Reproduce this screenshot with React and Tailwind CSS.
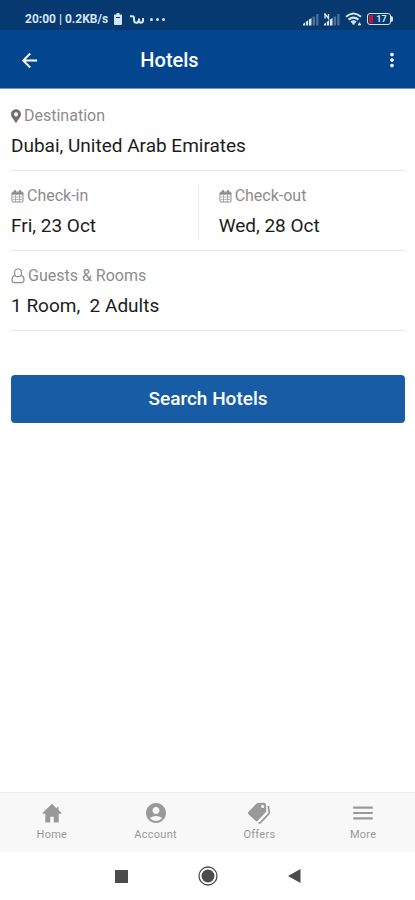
import { MdArrowBack, MdMoreVert, MdAccountCircle, MdMenu } from "react-icons/md";
import { FaMapMarkerAlt } from "react-icons/fa";

function CalendarIcon() {
  return (
    <svg viewBox="0 0 13 14" className="h-3.5 w-[13px] shrink-0" fill="none" stroke="currentColor" aria-hidden="true">
      <rect x="1" y="3" width="11" height="10" rx="1" />
      <path d="M1 4.5h11" strokeWidth="2.4" />
      <path d="M4 1v3M9 1v3" strokeWidth="1.8" />
      <path d="M2 8h9M2 10.5h9M4.5 6v7M8.5 6v7" strokeWidth="0.6" />
    </svg>
  );
}

function GuestIcon() {
  return (
    <svg viewBox="0 0 14 16" className="h-4 w-3.5 shrink-0" fill="none" stroke="currentColor" strokeWidth="1.200" aria-hidden="true">
      <rect x="3.600" y="1" width="6.800" height="7.600" rx="3.200" />
      <path d="M3.800 7.400C2 8 1 9.400 1 11.800c0 2 .8 2.800 2.200 2.800h7.600c1.400 0 2.200-.8 2.200-2.800 0-2.400-1-3.800-2.800-4.400" />
    </svg>
  );
}

function HomeIcon() {
  return (
    <svg viewBox="0 0 20 20" className="h-5 w-5" fill="currentColor" aria-hidden="true">
      <path d="M10 .8.700 9.800v.9h2.600v8.800h4.900v-5.700h3.600v5.700h4.900v-8.800h2.600v-.9l-2.800-2.700V4.200h-1.800v1.200z" />
    </svg>
  );
}

function OffersIcon() {
  return (
    <svg viewBox="0 0 24 22" className="h-[22px] w-6" aria-hidden="true">
      <path
        fill="currentColor"
        fillRule="evenodd"
        d="M8.800 2.200Q9.800 1.100 11.400 1l5.400-.2q2 0 2.200 2l.3 5.400q.1 1.300-.9 2.400l-7.400 8q-1.200 1.200-2.500.1l-7-6.400q-1.200-1.100-.1-2.400zM15.600 2.800a1.600 1.600 0 1 0 .1 3.200A1.600 1.600 0 0 0 15.600 2.800z"
      />
      <path d="M21.300 4l.9 6.200q.1 1-.7 1.900l-7.800 8.300q-1 1-2 .2" fill="none" stroke="currentColor" strokeWidth="1.700" />
    </svg>
  );
}

function SignalIcon({ roaming }) {
  return (
    <svg viewBox="0 0 16 13" className="h-[13px] w-4" aria-hidden="true">
      <path d="M0 12.500V11l2-1.500v3zM2.800 12.500V9l2.400-2v5.500zM6 12.500V6.500l2.500-1.500v7.500z" fill="#d5e4f5" />
      <path d="M9.600 12.500V3.500h2.400v9zM13.200 12.500V1h2.300v11.500z" fill="#4d7099" />
      {roaming && <path d="M1 5.500V1l3.500 4.500V1" fill="none" stroke="#d5e4f5" strokeWidth="1.400" />}
    </svg>
  );
}

function WifiIcon() {
  return (
    <svg viewBox="0 0 17 14" className="h-3.5 w-[17px]" fill="none" stroke="#d5e4f5" strokeWidth="2" aria-hidden="true">
      <path d="M1 4.800q7.500-6.500 15 0M3.500 7.600q5-4 10 0M6 10.300q2.500-2 5 0" />
      <path d="M8.500 10v2.500" strokeWidth="2.500" />
      <path d="M13 12.500h3M14.500 10.500v3" strokeWidth="1.400" />
    </svg>
  );
}

function StatusBar() {
  return (
    <div className="flex h-[30px] items-center justify-between bg-[#053970] pr-[22px] pl-[25px] pt-2 text-[#d5e4f5]">
      <div className="flex items-center">
        <span className="text-[12px] leading-4 font-bold whitespace-nowrap">20:00 | 0.2KB/s</span>
        <svg viewBox="0 0 8 12" className="ml-1.5 h-3 w-2" aria-hidden="true">
          <path d="M2.500 0h3v1.500H7q1 0 1 1V11q0 1-1 1H1q-1 0-1-1V2.500q0-1 1-1h1.500z" fill="currentColor" />
          <path d="M2 4.500h4" stroke="#053970" />
        </svg>
        <svg viewBox="0 0 14 9" className="ml-2 h-[9px] w-3.5" fill="none" stroke="currentColor" strokeWidth="2" aria-hidden="true">
          <path d="M0 1.200h2.500q1.500 0 1.500 2v1.500Q4 7.800 6.300 7.800T9 5V3.500V5q0 2.800 2 2.800T13 5V3" />
        </svg>
        <svg viewBox="0 0 15 3" className="ml-1.5 h-[3px] w-[15px]" fill="currentColor" aria-hidden="true">
          <circle cx="1.500" cy="1.500" r="1.500" />
          <circle cx="7.500" cy="1.500" r="1.500" />
          <circle cx="13.500" cy="1.500" r="1.500" />
        </svg>
      </div>
      <div className="flex items-center gap-[5px]">
        <SignalIcon />
        <SignalIcon roaming />
        <WifiIcon />
        <div className="flex items-center">
          <div className="flex h-3 w-6 items-center rounded-[3px] border border-[#d5e4f5] pl-px">
            <span className="h-2 w-1 bg-[#d01028]" />
            <span className="flex-1 text-center text-[9px] leading-none font-bold">17</span>
          </div>
          <span className="h-1.5 w-0.5 rounded-r bg-[#d5e4f5]" />
        </div>
      </div>
    </div>
  );
}

function Field({ icon, label, value, className = "" }) {
  return (
    <button type="button" className={`flex flex-col items-start gap-2 text-left ${className}`}>
      <span className="flex items-center gap-[3px] text-[16px] leading-5 text-[#8c8c8c]">
        {icon}
        {label}
      </span>
      <span className="text-[19px] leading-6 whitespace-pre text-[#1c1c1c]">{value}</span>
    </button>
  );
}

const tabs = [
  { label: "Home", icon: <HomeIcon /> },
  { label: "Account", icon: <MdAccountCircle size={24} /> },
  { label: "Offers", icon: <OffersIcon /> },
  { label: "More", icon: <MdMenu size={26} /> },
];

export default function App() {
  return (
    <div className="flex min-h-screen flex-col bg-white font-[Roboto,sans-serif]">
      <StatusBar />
      <header className="grid h-[59px] grid-cols-[1fr_auto_1fr] items-center border-b border-[#7096c4] bg-[#04458f] px-[18px] pt-0.5 text-white">
        <button type="button" aria-label="Back" className="justify-self-start">
          <MdArrowBack size={23} />
        </button>
        <h1 className="mr-[76px] text-[20px] leading-6 font-medium">Hotels</h1>
        <button type="button" aria-label="More options" className="-mr-1.5 justify-self-end">
          <MdMoreVert size={22} />
        </button>
      </header>

      <main className="flex-1 pt-0.5 pr-2.5 pl-[11px]">
        <div className="border-b border-[#ebebeb] pt-[15px] pb-3">
          <Field
            className="w-full"
            icon={<FaMapMarkerAlt className="h-3.5 w-2.5 text-[#707070]" />}
            label="Destination"
            value="Dubai, United Arab Emirates"
          />
        </div>
        <div className="grid grid-cols-[9fr_10fr] border-b border-[#ebebeb] pt-[13px] pb-2.5">
          <Field className="py-0.5" icon={<CalendarIcon />} label="Check-in" value="Fri, 23 Oct" />
          <Field
            className="border-l border-[#ebebeb] py-0.5 pl-5"
            icon={<CalendarIcon />}
            label="Check-out"
            value="Wed, 28 Oct"
          />
        </div>
        <div className="border-b border-[#ebebeb] pt-[15px] pb-3">
          <Field className="w-full" icon={<GuestIcon />} label="Guests & Rooms" value="1 Room,  2 Adults" />
        </div>
        <button
          type="button"
          className="mt-11 h-12 w-full rounded bg-[#185ca5] text-[19px] leading-6 font-medium text-white"
        >
          Search Hotels
        </button>
      </main>

      <nav className="grid h-[60px] grid-cols-4 border-t border-[#ececec] bg-[#f8f8f8] text-[#999999]">
        {tabs.map((tab) => (
          <a key={tab.label} href="#" className="flex flex-col items-center pt-2">
            <span className="flex h-6 items-center">{tab.icon}</span>
            <span className="mt-0.5 text-[11px] leading-4 tracking-wide">{tab.label}</span>
          </a>
        ))}
      </nav>

      <div className="flex h-12 items-center justify-center gap-[70px] bg-white text-[#4c4c4c]">
        <button type="button" aria-label="Recent apps">
          <svg viewBox="0 0 13 13" className="h-[13px] w-[13px]" fill="currentColor">
            <path d="M0 0h13v13H0z" />
          </svg>
        </button>
        <button type="button" aria-label="Home screen">
          <svg viewBox="0 0 20 20" className="h-5 w-5">
            <circle cx="10" cy="10" r="9" fill="none" stroke="currentColor" strokeWidth="1.300" />
            <circle cx="10" cy="10" r="6.500" fill="currentColor" />
          </svg>
        </button>
        <button type="button" aria-label="Go back">
          <svg viewBox="0 0 13 14" className="h-3.5 w-[13px]" fill="currentColor">
            <path d="M0 7 12.500 0v14z" />
          </svg>
        </button>
      </div>
    </div>
  );
}
